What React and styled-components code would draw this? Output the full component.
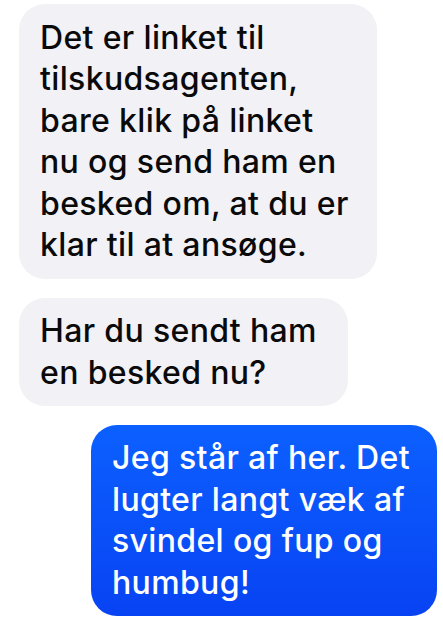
import React from 'react';
import styled, { createGlobalStyle } from 'styled-components';

const messages = [
  {
    id: 1,
    fromMe: false,
    width: 358,
    lines: [
      'Det er linket til',
      'tilskudsagenten,',
      'bare klik på linket',
      'nu og send ham en',
      'besked om, at du er',
      'klar til at ansøge.',
    ],
  },
  {
    id: 2,
    fromMe: false,
    width: 329,
    lines: ['Har du sendt ham', 'en besked nu?'],
  },
  {
    id: 3,
    fromMe: true,
    width: 346,
    lines: [
      'Jeg står af her. Det',
      'lugter langt væk af',
      'svindel og fup og',
      'humbug!',
    ],
  },
];

function App() {
  return (
    <>
      <GlobalStyle />
      <Thread>
        {messages.map((m) => (
          <Bubble key={m.id} $fromMe={m.fromMe} $width={m.width}>
            {m.lines.map((line, i) => (
              <Line key={i}>{line}</Line>
            ))}
          </Bubble>
        ))}
      </Thread>
    </>
  );
}

const GlobalStyle = createGlobalStyle`
  html, body {
    margin: 0;
    padding: 0;
    background: #ffffff;
  }
  body {
    font-family: Inter, "Noto Sans", "Liberation Sans", sans-serif;
    -webkit-font-smoothing: antialiased;
  }
`;

const Thread = styled.div`
  display: flex;
  flex-direction: column;
  gap: 19px;
  padding: 4px 6px 0 19px;
  width: 443px;
  box-sizing: border-box;
`;

const Bubble = styled.div`
  align-self: ${(p) => (p.$fromMe ? 'flex-end' : 'flex-start')};
  width: ${(p) => p.$width}px;
  box-sizing: border-box;
  padding: 12.5px 4px 12.5px 21px;
  border-radius: 26px;
  background: ${(p) =>
    p.$fromMe
      ? 'linear-gradient(to bottom, #0c60ff 0%, #0843f3 100%)'
      : '#f1f1f6'};
  color: ${(p) => (p.$fromMe ? '#ffffff' : '#0a0a0a')};
  font-size: 32px;
  font-weight: 500;
  line-height: 41.6px;
  letter-spacing: 0.35px;
`;

const Line = styled.div`
  white-space: nowrap;
`;

export default App;
